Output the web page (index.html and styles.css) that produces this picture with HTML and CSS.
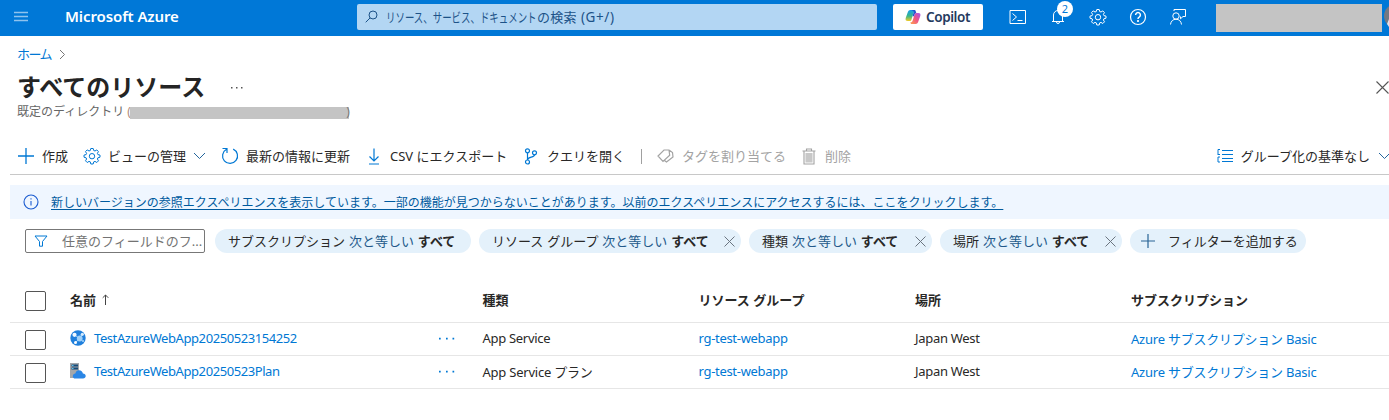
FILE: index.html
```html
<!DOCTYPE html>
<html lang="ja">
<head>
<meta charset="utf-8">
<title>すべてのリソース - Microsoft Azure</title>
<link rel="stylesheet" href="styles.css">
</head>
<body>
<header class="topbar">
  <svg class="menu" width="14" height="12" viewBox="0 0 14 12"><path d="M0 1.500h14M0 5.500h14M0 9.500h14" stroke="#8fc3ee" stroke-width="1.600"/></svg>
  <span class="brand">Microsoft Azure</span>
  <div class="search">
    <svg width="13" height="13" viewBox="0 0 13 13" fill="none" stroke="#1c5288"><circle cx="8" cy="5" r="4"/><path d="M5.100 7.900L.7 12.300"/></svg>
    <span class="search-text"><span class="kana">リソース、サービス、ドキュメント</span><span class="kanji">の検索</span> <span class="hint">(G+/)</span></span>
  </div>
  <div class="copilot">
    <svg width="16" height="16" viewBox="0 0 16 16">
      <defs>
        <linearGradient id="ca" x1="0" y1="0" x2="0" y2="1"><stop offset="0" stop-color="#159cf0"/><stop offset=".55" stop-color="#39b78b"/><stop offset="1" stop-color="#f3ca22"/></linearGradient>
        <linearGradient id="cb" x1="1" y1="0" x2="0" y2="1"><stop offset="0" stop-color="#a354ef"/><stop offset=".5" stop-color="#ef5685"/><stop offset="1" stop-color="#ffa34b"/></linearGradient>
      </defs>
      <path d="M9.500 1H5.400C3.800 1 3.100 2.200 2.500 4L.8 8.700C.1 10.800.8 12 2.800 12h1.900c1 0 1.500-.6 1.800-1.600L8.300 4.600C8.700 3.200 9.200 2.800 10.600 2.800 10.400 1.700 10.200 1 9.500 1z" fill="url(#ca)"/>
      <path d="M6.500 15h4.100c1.600 0 2.300-1.200 2.900-3l1.700-4.700C15.900 5.200 15.200 4 13.200 4h-1.900c-1 0-1.500.6-1.800 1.600L7.700 11.400C7.300 12.800 6.800 13.200 5.400 13.200 5.600 14.300 5.800 15 6.500 15z" fill="url(#cb)"/>
      <path d="M5.400 1h4.100c.8 0 1 .8 1.300 1.800L11.300 4c-1 0-1.500.6-1.800 1.600L9 7.200H7.500l.8-2.600c.2-.9.400-1.300.9-1.500C7.800 1.400 6.500 1 5.400 1z" fill="#2454cf"/>
    </svg>
    <span class="copilot-text">Copilot</span>
  </div>
  <div class="tools">
    <svg width="18" height="16" viewBox="0 0 18 16" fill="none" stroke="#fff"><path d="M1 1.500h15.500v13H1zM3.500 4.500l4 3.500-4 3.500M8.500 11.500h5"/></svg>
    <div class="bell">
      <svg width="14" height="16" viewBox="0 0 14 16" fill="none" stroke="#fff"><path d="M1 12.500h12M2.500 12.500V6a4.500 4.500 0 0 1 9 0v6.500M5.500 13a1.500 1.500 0 0 0 3 0"/></svg>
      <span class="badge">2</span>
    </div>
    <svg width="18" height="18" viewBox="0 0 18 18" fill="none" stroke="#fff"><use href="#gear"/></svg>
    <svg width="18" height="18" viewBox="0 0 18 18" fill="none" stroke="#fff" stroke-width="1.200"><circle cx="9" cy="9" r="7.500"/><path d="M6.600 7a2.400 2.400 0 1 1 3.600 2.100C9.300 9.600 9 10 9 11" stroke-width="1.500"/><circle cx="9" cy="13" r=".5" fill="#fff"/></svg>
    <svg width="18" height="18" viewBox="0 0 18 18" fill="none" stroke="#fff"><circle cx="7" cy="8" r="3.200"/><path d="M1.500 16.500c.3-3.300 2.500-5.300 5.500-5.300s5.200 2 5.500 5.300M5 3V1.500h11.500v7H14l-2.500 2.300V8.500"/></svg>
  </div>
  <div class="account"></div>
  <svg class="avatar" width="5" height="24" viewBox="0 0 5 24"><circle cx="12" cy="12" r="12" fill="#737983"/><path d="M5 15v8l-2-3z" fill="#dce4eb"/></svg>
</header>

<svg class="defs" width="0" height="0"><defs>
  <g id="gear"><path d="M7.800 1.500h2.400l.5 2 1.300.5 1.800-1.100 1.600 1.700-1 1.800.5 1.200 2.100.5v2.100l-2.100.6-.5 1.200 1.100 1.800-1.700 1.700-1.800-1.100-1.300.5-.5 2.100H7.800l-.5-2.100-1.300-.5-1.800 1.100-1.700-1.700 1.100-1.800-.5-1.200-2.100-.6V8.100l2.100-.5.5-1.200-1.100-1.800 1.700-1.700L6 4l1.300-.5z" stroke-linejoin="round"/><circle cx="9" cy="9.200" r="2.700"/></g>
</defs></svg>

<main>
  <nav class="crumb"><a>ホーム</a><svg width="7" height="11" viewBox="0 0 7 11" fill="none" stroke="#777"><path d="M1 1l4.500 4.500L1 10"/></svg></nav>
  <div class="title-row">
    <h1>すべてのリソース</h1>
    <svg class="title-dots" width="12" height="3" viewBox="0 0 12 3" fill="#555"><path d="M0 1h1.500v1.500H0zM5 1h1.500v1.500H5zM10 1h1.500v1.500H10z"/></svg>
    <svg class="close" width="13" height="13" viewBox="0 0 13 13" stroke="#555" stroke-width="1.100"><path d="M.5.500l12 12M12.500.500l-12 12"/></svg>
  </div>
  <div class="subtitle"><span>既定のディレクトリ</span><span class="paren">(</span><i class="redact"></i><span class="paren-end">)</span></div>

  <div class="toolbar">
    <div class="cmd create"><svg width="16" height="16" viewBox="0 0 16 16" stroke="#0078d4" stroke-width="1.300"><path d="M8 0v16M0 8h16"/></svg><span>作成</span></div>
    <div class="cmd view"><svg width="18" height="18" viewBox="0 0 18 18" fill="none" stroke="#0078d4"><use href="#gear"/></svg><span>ビューの管理</span><svg class="chev" width="13" height="8" viewBox="0 0 13 8" fill="none" stroke="#24659c"><path d="M1 1l5.500 5.500L12 1"/></svg></div>
    <div class="cmd refresh"><svg width="18" height="18" viewBox="0 0 18 18" fill="none" stroke="#0078d4" stroke-width="1.200"><path d="M5.500 2.300a7.500 7.500 0 1 0 6.700-.2M1.500 1.500h4.500V6"/></svg><span>最新の情報に更新</span></div>
    <div class="cmd csv"><svg width="12" height="17" viewBox="0 0 12 17" fill="none" stroke="#0078d4" stroke-width="1.200"><path d="M6 .5v12.500M1.500 8.500L6 13l4.500-4.500M1 16h10"/></svg><span>CSV にエクスポート</span></div>
    <div class="cmd query"><svg width="14" height="17" viewBox="0 0 14 17" fill="none" stroke="#0078d4" stroke-width="1.200"><circle cx="3.500" cy="2.800" r="2"/><circle cx="3.500" cy="14" r="2"/><circle cx="10.500" cy="4.800" r="2"/><path d="M3.500 4.800V12M10.500 6.800c0 3-6.500 1.700-7 5"/></svg><span>クエリを開く</span></div>
    <i class="divider"></i>
    <div class="cmd tag off"><svg width="17" height="14" viewBox="0 0 17 14" fill="none" stroke="#a3a3a3" stroke-width="1.200"><path d="M7 1h5l.7 5.200L6 12.500 1 7zM12 1l3.500 2.500.5 4.500-6.500 5-2-1.500"/></svg><span>タグを割り当てる</span></div>
    <div class="cmd delete off"><svg width="14" height="17" viewBox="0 0 14 17" fill="none" stroke="#a3a3a3" stroke-width="1.100"><path d="M.5 3h13M4.500 3V1h5v2M2 3v13h10V3"/><path d="M4 5.500h6V14H4z" fill="#c8c8c8" stroke="#c8c8c8"/></svg><span>削除</span></div>
    <div class="cmd group"><svg width="16" height="14" viewBox="0 0 16 14" fill="none" stroke="#0078d4"><path d="M5 1.500h11M5 5.500h11M5 9.500h11M5 12.500h11" stroke-width="1.200"/><path d="M3 .5H1V6M3 5.500H1M3 8H1v5h2"/></svg><span>グループ化の基準なし</span><svg class="chev" width="13" height="8" viewBox="0 0 13 8" fill="none" stroke="#24659c"><path d="M1 1l5.500 5.500L12 1"/></svg></div>
  </div>

  <div class="banner">
    <svg width="16" height="16" viewBox="0 0 16 16" fill="none" stroke="#1a5bd0" stroke-width="1.100"><circle cx="8" cy="8" r="7"/><path d="M8 7v4.500M8 4.200v1.300"/></svg>
    <a>新しいバージョンの参照エクスペリエンスを表示しています。一部の機能が見つからないことがあります。以前のエクスペリエンスにアクセスするには、ここをクリックします。</a>
  </div>

  <div class="filters">
    <div class="field"><svg width="14" height="12" viewBox="0 0 14 12" fill="none" stroke="#0078d4"><path d="M1 1h12L8.500 6.500v4.700h-3V6.500z"/></svg><span>任意のフィールドのフ...</span></div>
    <div class="pill p-sub"><span>サブスクリプション <em>次と等しい</em> <b>すべて</b></span></div>
    <div class="pill p-rg"><span>リソース グループ <em>次と等しい</em> <b>すべて</b></span><svg class="x" width="11" height="11" viewBox="0 0 11 11"><path d="M.5.500l10 10M10.500.500l-10 10"/></svg></div>
    <div class="pill p-kind"><span>種類 <em>次と等しい</em> <b>すべて</b></span><svg class="x" width="11" height="11" viewBox="0 0 11 11"><path d="M.5.500l10 10M10.500.500l-10 10"/></svg></div>
    <div class="pill p-loc"><span>場所 <em>次と等しい</em> <b>すべて</b></span><svg class="x" width="11" height="11" viewBox="0 0 11 11"><path d="M.5.500l10 10M10.500.500l-10 10"/></svg></div>
    <div class="pill p-add"><svg width="14" height="14" viewBox="0 0 14 14" stroke="#286496" stroke-width="1.200"><path d="M7 0v14M0 7h14"/></svg><span>フィルターを追加する</span></div>
  </div>

  <div class="table">
    <div class="row head">
      <i class="check"></i><span class="name">名前<svg class="sort" width="7" height="11" viewBox="0 0 7 11" fill="none" stroke="#444"><path d="M3.500 11V1M.7 3.800L3.500 1l2.800 2.800"/></svg></span><span></span><span>種類</span><span>リソース グループ</span><span>場所</span><span>サブスクリプション</span>
    </div>
    <div class="row">
      <i class="check"></i>
      <span class="name link"><svg width="16" height="16" viewBox="0 0 16 16"><circle cx="8" cy="8" r="7.700" fill="#1f7fdc"/><path d="M4.500 4.500L9.500 9l-4 3.300M9.500 9L12 4" stroke="#9cd0fa" fill="none"/><circle cx="4.500" cy="4.800" r="2.100" fill="#f1f8ff"/><circle cx="9.700" cy="8.500" r="2.900" fill="#9fd0f8"/><circle cx="5.500" cy="12.500" r="1.500" fill="#fff"/><circle cx="12.300" cy="4.300" r="1.600" fill="#d5ebfd"/><circle cx="13" cy="11" r="1.100" fill="#9cd0fa"/></svg><span class="latin">TestAzureWebApp20250523154252</span></span>
      <span class="more"><svg width="16" height="3" viewBox="0 0 16 3" fill="#0078d4"><path d="M0 .7h1.700v1.700H0zM7 .7h1.700v1.700H7zM13.500.7h1.700v1.700h-1.700z"/></svg></span>
      <span class="svc">App Service</span><span class="link rg">rg-test-webapp</span><span class="loc">Japan West</span><span class="link sub">Azure サブスクリプション Basic</span>
    </div>
    <div class="row">
      <i class="check"></i>
      <span class="name link"><svg width="16" height="16" viewBox="0 0 16 16"><path d="M0 0h9v15H0z" fill="#a4a7aa"/><path d="M1.500 1.500h6.500v2H1.500zM1.500 4.500h6.500v2H1.500z" fill="#164a78"/><path d="M2 2h1.500v1H2zM2 5h1.500v1H2z" fill="#58c4ef"/><path d="M5.500 15.500C3.500 15.500 2.700 14.200 2.800 12.900 2.900 11.500 4 10.600 5.300 10.500 5.800 8.400 7.200 7.200 9 7.200c2.200 0 3.600 1.400 3.900 3.300 1.700.1 2.800 1.100 2.800 2.500s-1.100 2.500-2.700 2.500z" fill="#2b86e5"/></svg><span class="latin plan">TestAzureWebApp20250523Plan</span></span>
      <span class="more"><svg width="16" height="3" viewBox="0 0 16 3" fill="#0078d4"><path d="M0 .7h1.700v1.700H0zM7 .7h1.700v1.700H7zM13.500.7h1.700v1.700h-1.700z"/></svg></span>
      <span class="svc svc-ja">App Service プラン</span><span class="link rg">rg-test-webapp</span><span class="loc">Japan West</span><span class="link sub">Azure サブスクリプション Basic</span>
    </div>
  </div>
</main>
</body>
</html>
```

FILE: styles.css
```css
* { box-sizing: border-box; }
body { margin: 0; height: 420px; overflow: hidden; background: #fff; color: #292827; font: 13px/18px "Noto Sans", "Noto Sans CJK JP", sans-serif; white-space: nowrap; }
svg { flex: none; display: block; }
svg.defs { position: absolute; }

.topbar { height: 36px; background: #0078d7; display: flex; align-items: center; padding-left: 14px; padding-bottom: 4px; overflow: hidden; }
.menu { margin-top: 1px; }
.brand { width: 292px; margin-left: 37px; color: #fff; font-size: 15px; font-weight: 600; letter-spacing: -0.1px; }
.search { width: 520px; height: 26px; margin-top: 1px; border-radius: 2px; background: #b3d6f3; display: flex; align-items: center; padding-left: 8px; color: #1c5288; }
.search-text { margin-left: 8px; display: flex; gap: 4px; }
.kana { width: 151px; margin-right: -4px; transform: scaleX(0.726); transform-origin: 0 50%; }
.kanji { letter-spacing: 0.300px; }
.hint { font-size: 13.500px; letter-spacing: 0.600px; }
.copilot { width: 90px; height: 26px; margin: 1px 0 0 16px; border-radius: 2px; background: #fff; color: #243a5e; display: flex; align-items: center; padding-left: 12px; }
.copilot-text { margin-left: 5px; font-size: 13.500px; font-weight: 600; letter-spacing: -0.400px; }
.tools { display: flex; align-items: center; margin: 1px 0 0 26px; width: 207px; gap: 22px; }
.bell { position: relative; width: 18px; padding-left: 2px; }
.badge { position: absolute; left: 8px; top: -8px; width: 16px; height: 16px; border-radius: 50%; background: #fff; color: #0078d7; font-size: 11px; line-height: 16px; text-align: center; }
.account { width: 166px; height: 28px; margin-top: 4px; background: #c4c4c4; }
.avatar { margin-left: 2px; }

.crumb { height: 37px; padding: 0 0 1px 17px; display: flex; align-items: center; color: #0078d4; letter-spacing: -1.600px; }
.crumb svg { margin: 1px 0 0 8px; }
.title-row { height: 29px; padding-left: 17px; display: flex; align-items: center; }
h1 { margin: 0; width: 214px; padding-bottom: 2px; font-size: 24px; line-height: 29px; font-weight: 700; color: #242424; }
.close { margin-left: auto; margin-right: 0; }
.subtitle { height: 19px; padding-left: 17px; display: flex; align-items: center; font-size: 12px; color: #666; }
.paren { width: 3px; margin-left: 3px; color: #b08a78; }
.redact { width: 219px; height: 12px; background: #c4c4c4; margin-top: 3px; }
.paren-end { width: 4px; margin-left: -3px; color: #777; }

.toolbar { height: 54px; margin-left: 10px; padding-left: 8px; border-bottom: 1px solid #c8c8c8; display: flex; align-items: center; }
.cmd { height: 19px; display: flex; align-items: center; margin-top: 17px; }
.create { width: 65px; gap: 8px; }
.view { width: 138px; gap: 7px; }
.refresh { width: 147px; gap: 7px; }
.csv { width: 156px; gap: 10px; }
.query { width: 117px; gap: 9px; }
.divider { width: 1px; height: 15px; background: #a0a0a0; margin: 17px 15px 0 0; }
.tag { width: 145px; gap: 8px; }
.delete { gap: 9px; }
.off { color: #a3a3a3; }
.group { margin-left: auto; gap: 8px; margin-right: -2px; }

.banner { height: 34px; margin: 10px 0 0 10px; background: #eff6ff; display: flex; align-items: center; padding-left: 13px; gap: 12px; }
.banner a { color: #005a9e; font-size: 12px; text-decoration: underline; text-underline-offset: 2px; padding-top: 1px; }

.filters { display: flex; height: 24px; margin: 10px 0 0 25px; }
.field { width: 180px; border: 1px solid #777; border-radius: 2px; padding-left: 8px; display: flex; align-items: center; gap: 14px; color: #737373; margin-right: 10px; }
.pill { height: 24px; border-radius: 12px; background: #e4f1fb; display: flex; align-items: center; padding-left: 13px; margin-right: 8px; word-spacing: 0.500px; }
.pill em { font-style: normal; color: #23598a; }
.x { margin-left: auto; margin-right: 6px; stroke: #6b7580; }
.p-sub { width: 256px; }
.p-rg { width: 262px; }
.p-kind { width: 183px; }
.p-loc { width: 182px; }
.p-add { width: 176px; gap: 13px; padding-left: 11px; }

.table { margin: 26px 0 0 10px; }
.row { height: 33px; border-bottom: 1px solid #e6e6e6; display: grid; grid-template-columns: 60px 369px 43.500px 216px 216.500px 216px 1fr; align-items: center; }
.head { height: 44px; font-weight: 700; }
.check { width: 21px; height: 20px; border: 1px solid #555; border-radius: 2px; margin: 2px 0 0 15px; }
.head .check { margin-top: 0; }
.head span { padding-bottom: 2px; }
.name { display: flex; align-items: center; gap: 8px; }
.row:not(.head) .name { padding-bottom: 2px; }
.sort { margin-left: -2px; }
.more { padding-bottom: 1px; }
.link { color: #0078d4; }
.latin { letter-spacing: -0.420px; }
.svc, .rg, .loc { letter-spacing: -0.300px; padding-bottom: 2px; }
.svc-ja { padding-bottom: 0; letter-spacing: -0.230px; }
.sub { letter-spacing: -0.230px; }
```
